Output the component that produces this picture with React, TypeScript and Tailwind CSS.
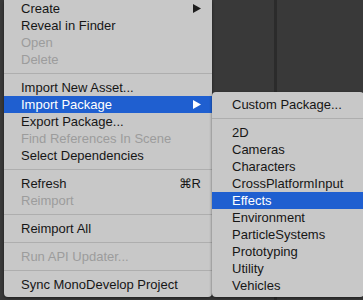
// Unity Assets context menu with Import Package submenu open
type Item =
  | { kind: "sep" }
  | { kind: "item"; label: string; disabled?: boolean; active?: boolean; arrow?: boolean; shortcut?: string };

const mainItems: Item[] = [
  { kind: "item", label: "Create", arrow: true },
  { kind: "item", label: "Reveal in Finder" },
  { kind: "item", label: "Open", disabled: true },
  { kind: "item", label: "Delete", disabled: true },
  { kind: "sep" },
  { kind: "item", label: "Import New Asset..." },
  { kind: "item", label: "Import Package", arrow: true, active: true },
  { kind: "item", label: "Export Package..." },
  { kind: "item", label: "Find References In Scene", disabled: true },
  { kind: "item", label: "Select Dependencies" },
  { kind: "sep" },
  { kind: "item", label: "Refresh", shortcut: "⌘R" },
  { kind: "item", label: "Reimport", disabled: true },
  { kind: "sep" },
  { kind: "item", label: "Reimport All" },
  { kind: "sep" },
  { kind: "item", label: "Run API Updater...", disabled: true },
  { kind: "sep" },
  { kind: "item", label: "Sync MonoDevelop Project" },
];

const subItems: Item[] = [
  { kind: "item", label: "Custom Package..." },
  { kind: "sep" },
  { kind: "item", label: "2D" },
  { kind: "item", label: "Cameras" },
  { kind: "item", label: "Characters" },
  { kind: "item", label: "CrossPlatformInput" },
  { kind: "item", label: "Effects", active: true },
  { kind: "item", label: "Environment" },
  { kind: "item", label: "ParticleSystems" },
  { kind: "item", label: "Prototyping" },
  { kind: "item", label: "Utility" },
  { kind: "item", label: "Vehicles" },
];

function Arrow({ white }: { white?: boolean }) {
  return (
    <svg width="8" height="9" viewBox="0 0 8 9" className="block">
      <path d="M0 0 L8 4.5 L0 9 Z" fill={white ? "#ffffff" : "#1e1e1e"} />
    </svg>
  );
}

function Rows({ items, padLeft }: { items: Item[]; padLeft: string }) {
  return (
    <>
      {items.map((it, i) =>
        it.kind === "sep" ? (
          <div key={i} className="h-[11px] flex items-center">
            <div className="h-px w-full bg-[#aeaeae]" />
          </div>
        ) : (
          <div
            key={i}
            className={`h-[17px] flex items-center justify-between ${padLeft} pr-[11px] ${
              it.active ? "bg-[#1f5fd0] text-white" : it.disabled ? "text-[#9c9c9c]" : "text-[#161616]"
            }`}
          >
            <span className="whitespace-nowrap">{it.label}</span>
            {it.arrow && <Arrow white={it.active} />}
            {it.shortcut && <span className="whitespace-nowrap">{it.shortcut}</span>}
          </div>
        )
      )}
    </>
  );
}

export default function App() {
  return (
    <div
      className="relative w-[363px] h-[300px] overflow-hidden bg-[#393939] text-[13px] leading-none"
      style={{ fontFamily: '"Liberation Sans", Arial, sans-serif' }}
    >
      <div className="absolute left-[274px] top-0 h-full w-[3px] bg-[#2b2b2b]" />

      <div className="absolute left-[4px] top-0 w-[208px] pb-[4px] bg-[#c8c8c8] rounded-b-[4px] shadow-[0_1px_3px_rgba(0,0,0,0.5)]">
        <Rows items={mainItems} padLeft="pl-[17px]" />
      </div>

      <div className="absolute left-[212px] top-[92px] w-[152px] pt-[4px] pb-[3px] bg-[#c8c8c8] rounded-[4px] shadow-[0_1px_3px_rgba(0,0,0,0.5)]">
        <Rows items={subItems} padLeft="pl-[20px]" />
      </div>
    </div>
  );
}
